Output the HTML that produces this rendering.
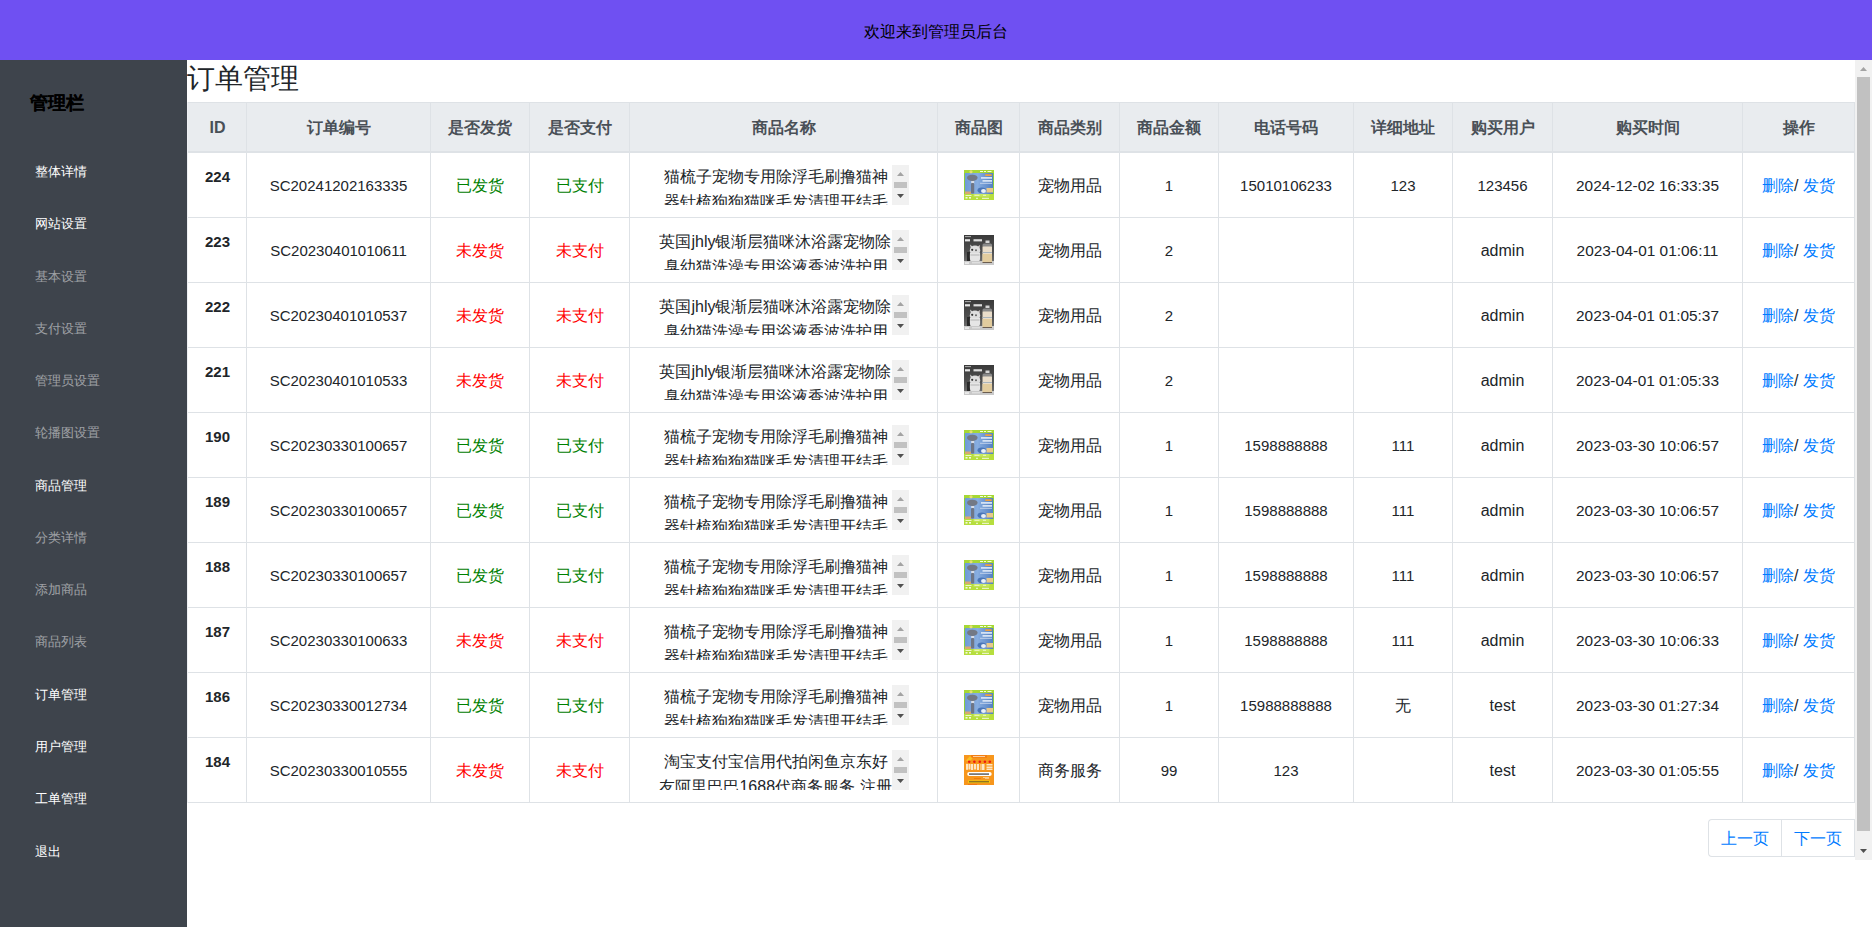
<!DOCTYPE html><html><head><meta charset="utf-8"><title>订单管理</title><style>
*{margin:0;padding:0;box-sizing:border-box}
html,body{width:1872px;height:927px;overflow:hidden;background:#fff}
body{font-family:"Liberation Sans",sans-serif;color:#212529;font-size:16px;position:relative}
.a{position:absolute}
.t{position:absolute;text-align:center;white-space:nowrap;line-height:24px;height:24px}
.vl{position:absolute;width:1px;background:#dee2e6}
.hl{position:absolute;height:1px;background:#dee2e6}
.th{font-weight:bold;color:#495057}
.idc{font-weight:bold;font-size:15px}
.n15{font-size:15px}.n154{font-size:15.4px}
.g{color:#008000}.r{color:#ff0000}
.lk{color:#007bff}
.menu{position:absolute;left:35px;font-size:13px;line-height:20px;height:20px;white-space:nowrap}
.sb{position:absolute;background:#f1f1f1}
.nm{position:absolute;width:250px;height:40px;overflow:hidden}
.nm .tx{position:absolute;left:0;top:0;width:233px;text-align:center;line-height:24px}
</style></head><body>
<div class="a" style="left:0;top:0;width:1872px;height:60px;background:#6f50f2"></div>
<div class="t" style="left:0;width:1872px;top:20px;color:#000">欢迎来到管理员后台</div>
<div class="a" style="left:0;top:60px;width:187px;height:867px;background:#3e444c"></div>
<div class="a" style="left:30px;top:88px;font-size:18.4px;font-weight:700;-webkit-text-stroke:0.12px #000;line-height:30px;color:#000;white-space:nowrap">管理栏</div>
<div class="menu" style="top:162.00px;color:#ffffff">整体详情</div>
<div class="menu" style="top:214.27px;color:#ffffff">网站设置</div>
<div class="menu" style="top:266.54px;color:rgba(255,255,255,.5)">基本设置</div>
<div class="menu" style="top:318.81px;color:rgba(255,255,255,.5)">支付设置</div>
<div class="menu" style="top:371.08px;color:rgba(255,255,255,.5)">管理员设置</div>
<div class="menu" style="top:423.35px;color:rgba(255,255,255,.5)">轮播图设置</div>
<div class="menu" style="top:475.62px;color:#ffffff">商品管理</div>
<div class="menu" style="top:527.89px;color:rgba(255,255,255,.5)">分类详情</div>
<div class="menu" style="top:580.16px;color:rgba(255,255,255,.5)">添加商品</div>
<div class="menu" style="top:632.43px;color:rgba(255,255,255,.5)">商品列表</div>
<div class="menu" style="top:684.70px;color:#ffffff">订单管理</div>
<div class="menu" style="top:736.97px;color:#ffffff">用户管理</div>
<div class="menu" style="top:789.24px;color:#ffffff">工单管理</div>
<div class="menu" style="top:841.51px;color:#ffffff">退出</div>
<div class="a" style="left:187px;top:61px;font-size:28px;line-height:36px;white-space:nowrap;color:#212529">订单管理</div>
<div class="a" style="left:187px;top:102px;width:1668px;height:50px;background:#e9ecef"></div>
<div class="hl" style="left:188px;top:102px;width:1667px"></div>
<div class="hl" style="left:188px;top:151px;width:1667px;height:2px"></div>
<div class="hl" style="left:188px;top:217px;width:1667px"></div>
<div class="hl" style="left:188px;top:282px;width:1667px"></div>
<div class="hl" style="left:188px;top:347px;width:1667px"></div>
<div class="hl" style="left:188px;top:412px;width:1667px"></div>
<div class="hl" style="left:188px;top:477px;width:1667px"></div>
<div class="hl" style="left:188px;top:542px;width:1667px"></div>
<div class="hl" style="left:188px;top:607px;width:1667px"></div>
<div class="hl" style="left:188px;top:672px;width:1667px"></div>
<div class="hl" style="left:188px;top:737px;width:1667px"></div>
<div class="hl" style="left:188px;top:802px;width:1667px"></div>
<div class="vl" style="left:246px;top:102px;height:701px"></div>
<div class="vl" style="left:430px;top:102px;height:701px"></div>
<div class="vl" style="left:529px;top:102px;height:701px"></div>
<div class="vl" style="left:629px;top:102px;height:701px"></div>
<div class="vl" style="left:937px;top:102px;height:701px"></div>
<div class="vl" style="left:1019px;top:102px;height:701px"></div>
<div class="vl" style="left:1119px;top:102px;height:701px"></div>
<div class="vl" style="left:1218px;top:102px;height:701px"></div>
<div class="vl" style="left:1353px;top:102px;height:701px"></div>
<div class="vl" style="left:1452px;top:102px;height:701px"></div>
<div class="vl" style="left:1552px;top:102px;height:701px"></div>
<div class="vl" style="left:1742px;top:102px;height:701px"></div>
<div class="vl" style="left:1854px;top:102px;height:701px"></div>
<div class="vl" style="left:187px;top:102px;height:701px;background:#eef0f3"></div>
<div class="t th" style="left:189px;width:57px;top:115.5px">ID</div>
<div class="t th" style="left:247px;width:183px;top:115.5px">订单编号</div>
<div class="t th" style="left:431px;width:98px;top:115.5px">是否发货</div>
<div class="t th" style="left:530px;width:99px;top:115.5px">是否支付</div>
<div class="t th" style="left:630px;width:307px;top:115.5px">商品名称</div>
<div class="t th" style="left:938px;width:81px;top:115.5px">商品图</div>
<div class="t th" style="left:1020px;width:99px;top:115.5px">商品类别</div>
<div class="t th" style="left:1120px;width:98px;top:115.5px">商品金额</div>
<div class="t th" style="left:1219px;width:134px;top:115.5px">电话号码</div>
<div class="t th" style="left:1354px;width:98px;top:115.5px">详细地址</div>
<div class="t th" style="left:1453px;width:99px;top:115.5px">购买用户</div>
<div class="t th" style="left:1553px;width:189px;top:115.5px">购买时间</div>
<div class="t th" style="left:1743px;width:111px;top:115.5px">操作</div>
<div class="t idc" style="left:189px;width:57px;top:165px">224</div>
<div class="t n15" style="left:247px;width:183px;top:174px">SC20241202163335</div>
<div class="t g" style="left:431px;width:98px;top:174px">已发货</div>
<div class="t g" style="left:530px;width:99px;top:174px">已支付</div>
<div class="nm" style="left:659px;top:165px"><div class="tx">猫梳子宠物专用除浮毛刷撸猫神</div><div class="tx" style="top:25px">器针梳狗狗猫咪毛发清理开结毛</div></div>
<div class="sb" style="left:892px;top:165px;width:17px;height:40px"></div>
<svg class="a" style="left:897px;top:172px" width="7" height="4"><polygon points="0,4 3.5,0 7,4" fill="#a3a3a3"/></svg>
<div class="a" style="left:894px;top:182px;width:13px;height:6px;background:#c1c1c1"></div>
<svg class="a" style="left:897px;top:194px" width="7" height="4"><polygon points="0,0 7,0 3.5,4" fill="#505050"/></svg>
<svg class="a" style="left:964px;top:170px" width="30" height="30" viewBox="0 0 30 30"><defs><linearGradient id="gc" x1="0" y1="0" x2="1" y2="0"><stop offset="0" stop-color="#6e9ad5"/><stop offset=".45" stop-color="#88aee0"/><stop offset="1" stop-color="#527fc1"/></linearGradient></defs>
<rect width="30" height="30" fill="#8ccf3c"/>
<rect x="1" y="3" width="28" height="21.5" fill="url(#gc)"/>
<rect x="0" y="0" width="30" height="3" fill="#a6d834"/>
<circle cx="7" cy="1.8" r="1.6" fill="#e8e070"/>
<rect x="16" y="1" width="3" height="1" fill="#f4ffe0"/><rect x="20" y="1" width="2" height="1" fill="#f4ffe0"/><rect x="23.5" y="1" width="4" height="1" fill="#f4ffe0"/>
<rect x="1" y="21.5" width="6" height="3" fill="#d8a870"/>
<rect x="22.5" y="18" width="6.5" height="4.5" fill="#e8c88a"/>
<ellipse cx="8.3" cy="7.8" rx="5.3" ry="3.1" fill="#737985"/>
<rect x="7.2" y="11" width="3" height="2.5" fill="#d8dde6"/>
<rect x="7" y="13" width="3.2" height="10.5" rx="1" fill="#6e7686"/>
<rect x="21" y="4.2" width="7" height="1.8" rx=".9" fill="#f0a040"/>
<rect x="17" y="7" width="11" height="1.8" fill="#d4e2f4"/>
<rect x="18.5" y="10" width="9.5" height="1.8" fill="#d4e2f4"/>
<rect x="16" y="12.8" width="12" height="1" fill="#c0d2ec"/>
<ellipse cx="17.8" cy="20.3" rx="4.3" ry="2.8" fill="#4a76b8"/>
<ellipse cx="19.5" cy="21" rx="2.5" ry="2" fill="#e8eef7"/>
<rect x="0" y="24" width="30" height="6" fill="#b6de3e"/>
<rect x="9.5" y="24" width="16" height="2.6" fill="#c8e860"/>
<rect x="10.5" y="24.8" width="5" height="1" fill="#eef8c8"/><rect x="19" y="24.8" width="3" height="1" fill="#eef8c8"/>
<rect x="1.5" y="25" width="6" height="1" fill="#eef8c8"/>
<rect x="1.5" y="27" width="2" height="1.6" fill="#f4f8e0"/><rect x="5" y="27" width="2" height="1.6" fill="#f4f8e0"/>
<rect x="12" y="27.8" width="2" height="1" fill="#f4f8e0"/><rect x="18" y="27.8" width="7" height="1" fill="#f4f8e0"/></svg>
<div class="t " style="left:1020px;width:99px;top:174px">宠物用品</div>
<div class="t n15" style="left:1120px;width:98px;top:174px">1</div>
<div class="t n15" style="left:1219px;width:134px;top:174px">15010106233</div>
<div class="t n15" style="left:1354px;width:98px;top:174px">123</div>
<div class="t n15" style="left:1453px;width:99px;top:174px">123456</div>
<div class="t n154" style="left:1553px;width:189px;top:174px">2024-12-02 16:33:35</div>
<div class="t" style="left:1743px;width:111px;top:174px"><span class="lk">删除</span>/ <span class="lk">发货</span></div>
<div class="t idc" style="left:189px;width:57px;top:230px">223</div>
<div class="t n15" style="left:247px;width:183px;top:239px">SC20230401010611</div>
<div class="t r" style="left:431px;width:98px;top:239px">未发货</div>
<div class="t r" style="left:530px;width:99px;top:239px">未支付</div>
<div class="nm" style="left:659px;top:230px"><div class="tx">英国jhly银渐层猫咪沐浴露宠物除</div><div class="tx" style="top:25px">臭幼猫洗澡专用浴液香波洗护用</div></div>
<div class="sb" style="left:892px;top:230px;width:17px;height:40px"></div>
<svg class="a" style="left:897px;top:237px" width="7" height="4"><polygon points="0,4 3.5,0 7,4" fill="#a3a3a3"/></svg>
<div class="a" style="left:894px;top:247px;width:13px;height:6px;background:#c1c1c1"></div>
<svg class="a" style="left:897px;top:259px" width="7" height="4"><polygon points="0,0 7,0 3.5,4" fill="#505050"/></svg>
<svg class="a" style="left:964px;top:235px" width="30" height="30" viewBox="0 0 30 30"><defs><linearGradient id="gk" x1="0" y1="0" x2="0" y2="1"><stop offset="0" stop-color="#3a3a3a"/><stop offset=".55" stop-color="#4f4f4f"/><stop offset=".85" stop-color="#6a6a6a"/><stop offset="1" stop-color="#cfcfcf"/></linearGradient></defs>
<rect width="30" height="30" fill="url(#gk)"/>
<rect x="0" y="26" width="30" height="4" fill="#c9c9c9"/>
<rect x="1" y="1.2" width="6" height="0.9" fill="#bdbdbd"/>
<rect x="1" y="4.2" width="5" height="2.2" fill="#e6e6e6"/>
<rect x="9.5" y="4.2" width="8.5" height="2.2" fill="#dcdcdc"/>
<rect x="3" y="17" width="3" height="9" fill="#2a2a2a"/>
<polygon points="6,9.5 9,12 7,14" fill="#d8d8d8"/><polygon points="16,10 13,12 15.5,14" fill="#d0c8c8"/>
<ellipse cx="11" cy="15.5" rx="5.2" ry="5" fill="#dedede"/>
<path d="M6,18 Q5.5,26 7,26 L15,26 Q16.5,26 16,18 Z" fill="#e6e6e6"/>
<rect x="6.5" y="19" width="9" height="2" fill="#bdbdbd" opacity=".6"/>
<circle cx="8.2" cy="14.8" r="1.1" fill="#333"/><circle cx="12" cy="15.2" r="1" fill="#666"/>
<rect x="21.5" y="5.5" width="4" height="2.5" fill="#d4d4d4"/>
<rect x="18.5" y="8.5" width="9.5" height="3.5" rx="1.5" fill="#8a8a8a"/>
<rect x="18.5" y="11.5" width="9.5" height="16" fill="#e9ddca"/>
<rect x="18.5" y="17" width="9.5" height="1" fill="#a9b4bc"/>
<rect x="18.5" y="19" width="9.5" height="8" fill="#e2cc9e"/>
<rect x="18.5" y="27" width="9.5" height="1" fill="#6b5d50"/>
<rect x="1" y="27.3" width="4" height="1.5" fill="#f2f2f2"/><rect x="8" y="27.3" width="8" height="1" fill="#e8e8e8"/></svg>
<div class="t " style="left:1020px;width:99px;top:239px">宠物用品</div>
<div class="t n15" style="left:1120px;width:98px;top:239px">2</div>
<div class="t " style="left:1453px;width:99px;top:239px">admin</div>
<div class="t n154" style="left:1553px;width:189px;top:239px">2023-04-01 01:06:11</div>
<div class="t" style="left:1743px;width:111px;top:239px"><span class="lk">删除</span>/ <span class="lk">发货</span></div>
<div class="t idc" style="left:189px;width:57px;top:295px">222</div>
<div class="t n15" style="left:247px;width:183px;top:304px">SC20230401010537</div>
<div class="t r" style="left:431px;width:98px;top:304px">未发货</div>
<div class="t r" style="left:530px;width:99px;top:304px">未支付</div>
<div class="nm" style="left:659px;top:295px"><div class="tx">英国jhly银渐层猫咪沐浴露宠物除</div><div class="tx" style="top:25px">臭幼猫洗澡专用浴液香波洗护用</div></div>
<div class="sb" style="left:892px;top:295px;width:17px;height:40px"></div>
<svg class="a" style="left:897px;top:302px" width="7" height="4"><polygon points="0,4 3.5,0 7,4" fill="#a3a3a3"/></svg>
<div class="a" style="left:894px;top:312px;width:13px;height:6px;background:#c1c1c1"></div>
<svg class="a" style="left:897px;top:324px" width="7" height="4"><polygon points="0,0 7,0 3.5,4" fill="#505050"/></svg>
<svg class="a" style="left:964px;top:300px" width="30" height="30" viewBox="0 0 30 30"><defs><linearGradient id="gk" x1="0" y1="0" x2="0" y2="1"><stop offset="0" stop-color="#3a3a3a"/><stop offset=".55" stop-color="#4f4f4f"/><stop offset=".85" stop-color="#6a6a6a"/><stop offset="1" stop-color="#cfcfcf"/></linearGradient></defs>
<rect width="30" height="30" fill="url(#gk)"/>
<rect x="0" y="26" width="30" height="4" fill="#c9c9c9"/>
<rect x="1" y="1.2" width="6" height="0.9" fill="#bdbdbd"/>
<rect x="1" y="4.2" width="5" height="2.2" fill="#e6e6e6"/>
<rect x="9.5" y="4.2" width="8.5" height="2.2" fill="#dcdcdc"/>
<rect x="3" y="17" width="3" height="9" fill="#2a2a2a"/>
<polygon points="6,9.5 9,12 7,14" fill="#d8d8d8"/><polygon points="16,10 13,12 15.5,14" fill="#d0c8c8"/>
<ellipse cx="11" cy="15.5" rx="5.2" ry="5" fill="#dedede"/>
<path d="M6,18 Q5.5,26 7,26 L15,26 Q16.5,26 16,18 Z" fill="#e6e6e6"/>
<rect x="6.5" y="19" width="9" height="2" fill="#bdbdbd" opacity=".6"/>
<circle cx="8.2" cy="14.8" r="1.1" fill="#333"/><circle cx="12" cy="15.2" r="1" fill="#666"/>
<rect x="21.5" y="5.5" width="4" height="2.5" fill="#d4d4d4"/>
<rect x="18.5" y="8.5" width="9.5" height="3.5" rx="1.5" fill="#8a8a8a"/>
<rect x="18.5" y="11.5" width="9.5" height="16" fill="#e9ddca"/>
<rect x="18.5" y="17" width="9.5" height="1" fill="#a9b4bc"/>
<rect x="18.5" y="19" width="9.5" height="8" fill="#e2cc9e"/>
<rect x="18.5" y="27" width="9.5" height="1" fill="#6b5d50"/>
<rect x="1" y="27.3" width="4" height="1.5" fill="#f2f2f2"/><rect x="8" y="27.3" width="8" height="1" fill="#e8e8e8"/></svg>
<div class="t " style="left:1020px;width:99px;top:304px">宠物用品</div>
<div class="t n15" style="left:1120px;width:98px;top:304px">2</div>
<div class="t " style="left:1453px;width:99px;top:304px">admin</div>
<div class="t n154" style="left:1553px;width:189px;top:304px">2023-04-01 01:05:37</div>
<div class="t" style="left:1743px;width:111px;top:304px"><span class="lk">删除</span>/ <span class="lk">发货</span></div>
<div class="t idc" style="left:189px;width:57px;top:360px">221</div>
<div class="t n15" style="left:247px;width:183px;top:369px">SC20230401010533</div>
<div class="t r" style="left:431px;width:98px;top:369px">未发货</div>
<div class="t r" style="left:530px;width:99px;top:369px">未支付</div>
<div class="nm" style="left:659px;top:360px"><div class="tx">英国jhly银渐层猫咪沐浴露宠物除</div><div class="tx" style="top:25px">臭幼猫洗澡专用浴液香波洗护用</div></div>
<div class="sb" style="left:892px;top:360px;width:17px;height:40px"></div>
<svg class="a" style="left:897px;top:367px" width="7" height="4"><polygon points="0,4 3.5,0 7,4" fill="#a3a3a3"/></svg>
<div class="a" style="left:894px;top:377px;width:13px;height:6px;background:#c1c1c1"></div>
<svg class="a" style="left:897px;top:389px" width="7" height="4"><polygon points="0,0 7,0 3.5,4" fill="#505050"/></svg>
<svg class="a" style="left:964px;top:365px" width="30" height="30" viewBox="0 0 30 30"><defs><linearGradient id="gk" x1="0" y1="0" x2="0" y2="1"><stop offset="0" stop-color="#3a3a3a"/><stop offset=".55" stop-color="#4f4f4f"/><stop offset=".85" stop-color="#6a6a6a"/><stop offset="1" stop-color="#cfcfcf"/></linearGradient></defs>
<rect width="30" height="30" fill="url(#gk)"/>
<rect x="0" y="26" width="30" height="4" fill="#c9c9c9"/>
<rect x="1" y="1.2" width="6" height="0.9" fill="#bdbdbd"/>
<rect x="1" y="4.2" width="5" height="2.2" fill="#e6e6e6"/>
<rect x="9.5" y="4.2" width="8.5" height="2.2" fill="#dcdcdc"/>
<rect x="3" y="17" width="3" height="9" fill="#2a2a2a"/>
<polygon points="6,9.5 9,12 7,14" fill="#d8d8d8"/><polygon points="16,10 13,12 15.5,14" fill="#d0c8c8"/>
<ellipse cx="11" cy="15.5" rx="5.2" ry="5" fill="#dedede"/>
<path d="M6,18 Q5.5,26 7,26 L15,26 Q16.5,26 16,18 Z" fill="#e6e6e6"/>
<rect x="6.5" y="19" width="9" height="2" fill="#bdbdbd" opacity=".6"/>
<circle cx="8.2" cy="14.8" r="1.1" fill="#333"/><circle cx="12" cy="15.2" r="1" fill="#666"/>
<rect x="21.5" y="5.5" width="4" height="2.5" fill="#d4d4d4"/>
<rect x="18.5" y="8.5" width="9.5" height="3.5" rx="1.5" fill="#8a8a8a"/>
<rect x="18.5" y="11.5" width="9.5" height="16" fill="#e9ddca"/>
<rect x="18.5" y="17" width="9.5" height="1" fill="#a9b4bc"/>
<rect x="18.5" y="19" width="9.5" height="8" fill="#e2cc9e"/>
<rect x="18.5" y="27" width="9.5" height="1" fill="#6b5d50"/>
<rect x="1" y="27.3" width="4" height="1.5" fill="#f2f2f2"/><rect x="8" y="27.3" width="8" height="1" fill="#e8e8e8"/></svg>
<div class="t " style="left:1020px;width:99px;top:369px">宠物用品</div>
<div class="t n15" style="left:1120px;width:98px;top:369px">2</div>
<div class="t " style="left:1453px;width:99px;top:369px">admin</div>
<div class="t n154" style="left:1553px;width:189px;top:369px">2023-04-01 01:05:33</div>
<div class="t" style="left:1743px;width:111px;top:369px"><span class="lk">删除</span>/ <span class="lk">发货</span></div>
<div class="t idc" style="left:189px;width:57px;top:425px">190</div>
<div class="t n15" style="left:247px;width:183px;top:434px">SC20230330100657</div>
<div class="t g" style="left:431px;width:98px;top:434px">已发货</div>
<div class="t g" style="left:530px;width:99px;top:434px">已支付</div>
<div class="nm" style="left:659px;top:425px"><div class="tx">猫梳子宠物专用除浮毛刷撸猫神</div><div class="tx" style="top:25px">器针梳狗狗猫咪毛发清理开结毛</div></div>
<div class="sb" style="left:892px;top:425px;width:17px;height:40px"></div>
<svg class="a" style="left:897px;top:432px" width="7" height="4"><polygon points="0,4 3.5,0 7,4" fill="#a3a3a3"/></svg>
<div class="a" style="left:894px;top:442px;width:13px;height:6px;background:#c1c1c1"></div>
<svg class="a" style="left:897px;top:454px" width="7" height="4"><polygon points="0,0 7,0 3.5,4" fill="#505050"/></svg>
<svg class="a" style="left:964px;top:430px" width="30" height="30" viewBox="0 0 30 30"><defs><linearGradient id="gc" x1="0" y1="0" x2="1" y2="0"><stop offset="0" stop-color="#6e9ad5"/><stop offset=".45" stop-color="#88aee0"/><stop offset="1" stop-color="#527fc1"/></linearGradient></defs>
<rect width="30" height="30" fill="#8ccf3c"/>
<rect x="1" y="3" width="28" height="21.5" fill="url(#gc)"/>
<rect x="0" y="0" width="30" height="3" fill="#a6d834"/>
<circle cx="7" cy="1.8" r="1.6" fill="#e8e070"/>
<rect x="16" y="1" width="3" height="1" fill="#f4ffe0"/><rect x="20" y="1" width="2" height="1" fill="#f4ffe0"/><rect x="23.5" y="1" width="4" height="1" fill="#f4ffe0"/>
<rect x="1" y="21.5" width="6" height="3" fill="#d8a870"/>
<rect x="22.5" y="18" width="6.5" height="4.5" fill="#e8c88a"/>
<ellipse cx="8.3" cy="7.8" rx="5.3" ry="3.1" fill="#737985"/>
<rect x="7.2" y="11" width="3" height="2.5" fill="#d8dde6"/>
<rect x="7" y="13" width="3.2" height="10.5" rx="1" fill="#6e7686"/>
<rect x="21" y="4.2" width="7" height="1.8" rx=".9" fill="#f0a040"/>
<rect x="17" y="7" width="11" height="1.8" fill="#d4e2f4"/>
<rect x="18.5" y="10" width="9.5" height="1.8" fill="#d4e2f4"/>
<rect x="16" y="12.8" width="12" height="1" fill="#c0d2ec"/>
<ellipse cx="17.8" cy="20.3" rx="4.3" ry="2.8" fill="#4a76b8"/>
<ellipse cx="19.5" cy="21" rx="2.5" ry="2" fill="#e8eef7"/>
<rect x="0" y="24" width="30" height="6" fill="#b6de3e"/>
<rect x="9.5" y="24" width="16" height="2.6" fill="#c8e860"/>
<rect x="10.5" y="24.8" width="5" height="1" fill="#eef8c8"/><rect x="19" y="24.8" width="3" height="1" fill="#eef8c8"/>
<rect x="1.5" y="25" width="6" height="1" fill="#eef8c8"/>
<rect x="1.5" y="27" width="2" height="1.6" fill="#f4f8e0"/><rect x="5" y="27" width="2" height="1.6" fill="#f4f8e0"/>
<rect x="12" y="27.8" width="2" height="1" fill="#f4f8e0"/><rect x="18" y="27.8" width="7" height="1" fill="#f4f8e0"/></svg>
<div class="t " style="left:1020px;width:99px;top:434px">宠物用品</div>
<div class="t n15" style="left:1120px;width:98px;top:434px">1</div>
<div class="t n15" style="left:1219px;width:134px;top:434px">1598888888</div>
<div class="t n15" style="left:1354px;width:98px;top:434px">111</div>
<div class="t " style="left:1453px;width:99px;top:434px">admin</div>
<div class="t n154" style="left:1553px;width:189px;top:434px">2023-03-30 10:06:57</div>
<div class="t" style="left:1743px;width:111px;top:434px"><span class="lk">删除</span>/ <span class="lk">发货</span></div>
<div class="t idc" style="left:189px;width:57px;top:490px">189</div>
<div class="t n15" style="left:247px;width:183px;top:499px">SC20230330100657</div>
<div class="t g" style="left:431px;width:98px;top:499px">已发货</div>
<div class="t g" style="left:530px;width:99px;top:499px">已支付</div>
<div class="nm" style="left:659px;top:490px"><div class="tx">猫梳子宠物专用除浮毛刷撸猫神</div><div class="tx" style="top:25px">器针梳狗狗猫咪毛发清理开结毛</div></div>
<div class="sb" style="left:892px;top:490px;width:17px;height:40px"></div>
<svg class="a" style="left:897px;top:497px" width="7" height="4"><polygon points="0,4 3.5,0 7,4" fill="#a3a3a3"/></svg>
<div class="a" style="left:894px;top:507px;width:13px;height:6px;background:#c1c1c1"></div>
<svg class="a" style="left:897px;top:519px" width="7" height="4"><polygon points="0,0 7,0 3.5,4" fill="#505050"/></svg>
<svg class="a" style="left:964px;top:495px" width="30" height="30" viewBox="0 0 30 30"><defs><linearGradient id="gc" x1="0" y1="0" x2="1" y2="0"><stop offset="0" stop-color="#6e9ad5"/><stop offset=".45" stop-color="#88aee0"/><stop offset="1" stop-color="#527fc1"/></linearGradient></defs>
<rect width="30" height="30" fill="#8ccf3c"/>
<rect x="1" y="3" width="28" height="21.5" fill="url(#gc)"/>
<rect x="0" y="0" width="30" height="3" fill="#a6d834"/>
<circle cx="7" cy="1.8" r="1.6" fill="#e8e070"/>
<rect x="16" y="1" width="3" height="1" fill="#f4ffe0"/><rect x="20" y="1" width="2" height="1" fill="#f4ffe0"/><rect x="23.5" y="1" width="4" height="1" fill="#f4ffe0"/>
<rect x="1" y="21.5" width="6" height="3" fill="#d8a870"/>
<rect x="22.5" y="18" width="6.5" height="4.5" fill="#e8c88a"/>
<ellipse cx="8.3" cy="7.8" rx="5.3" ry="3.1" fill="#737985"/>
<rect x="7.2" y="11" width="3" height="2.5" fill="#d8dde6"/>
<rect x="7" y="13" width="3.2" height="10.5" rx="1" fill="#6e7686"/>
<rect x="21" y="4.2" width="7" height="1.8" rx=".9" fill="#f0a040"/>
<rect x="17" y="7" width="11" height="1.8" fill="#d4e2f4"/>
<rect x="18.5" y="10" width="9.5" height="1.8" fill="#d4e2f4"/>
<rect x="16" y="12.8" width="12" height="1" fill="#c0d2ec"/>
<ellipse cx="17.8" cy="20.3" rx="4.3" ry="2.8" fill="#4a76b8"/>
<ellipse cx="19.5" cy="21" rx="2.5" ry="2" fill="#e8eef7"/>
<rect x="0" y="24" width="30" height="6" fill="#b6de3e"/>
<rect x="9.5" y="24" width="16" height="2.6" fill="#c8e860"/>
<rect x="10.5" y="24.8" width="5" height="1" fill="#eef8c8"/><rect x="19" y="24.8" width="3" height="1" fill="#eef8c8"/>
<rect x="1.5" y="25" width="6" height="1" fill="#eef8c8"/>
<rect x="1.5" y="27" width="2" height="1.6" fill="#f4f8e0"/><rect x="5" y="27" width="2" height="1.6" fill="#f4f8e0"/>
<rect x="12" y="27.8" width="2" height="1" fill="#f4f8e0"/><rect x="18" y="27.8" width="7" height="1" fill="#f4f8e0"/></svg>
<div class="t " style="left:1020px;width:99px;top:499px">宠物用品</div>
<div class="t n15" style="left:1120px;width:98px;top:499px">1</div>
<div class="t n15" style="left:1219px;width:134px;top:499px">1598888888</div>
<div class="t n15" style="left:1354px;width:98px;top:499px">111</div>
<div class="t " style="left:1453px;width:99px;top:499px">admin</div>
<div class="t n154" style="left:1553px;width:189px;top:499px">2023-03-30 10:06:57</div>
<div class="t" style="left:1743px;width:111px;top:499px"><span class="lk">删除</span>/ <span class="lk">发货</span></div>
<div class="t idc" style="left:189px;width:57px;top:555px">188</div>
<div class="t n15" style="left:247px;width:183px;top:564px">SC20230330100657</div>
<div class="t g" style="left:431px;width:98px;top:564px">已发货</div>
<div class="t g" style="left:530px;width:99px;top:564px">已支付</div>
<div class="nm" style="left:659px;top:555px"><div class="tx">猫梳子宠物专用除浮毛刷撸猫神</div><div class="tx" style="top:25px">器针梳狗狗猫咪毛发清理开结毛</div></div>
<div class="sb" style="left:892px;top:555px;width:17px;height:40px"></div>
<svg class="a" style="left:897px;top:562px" width="7" height="4"><polygon points="0,4 3.5,0 7,4" fill="#a3a3a3"/></svg>
<div class="a" style="left:894px;top:572px;width:13px;height:6px;background:#c1c1c1"></div>
<svg class="a" style="left:897px;top:584px" width="7" height="4"><polygon points="0,0 7,0 3.5,4" fill="#505050"/></svg>
<svg class="a" style="left:964px;top:560px" width="30" height="30" viewBox="0 0 30 30"><defs><linearGradient id="gc" x1="0" y1="0" x2="1" y2="0"><stop offset="0" stop-color="#6e9ad5"/><stop offset=".45" stop-color="#88aee0"/><stop offset="1" stop-color="#527fc1"/></linearGradient></defs>
<rect width="30" height="30" fill="#8ccf3c"/>
<rect x="1" y="3" width="28" height="21.5" fill="url(#gc)"/>
<rect x="0" y="0" width="30" height="3" fill="#a6d834"/>
<circle cx="7" cy="1.8" r="1.6" fill="#e8e070"/>
<rect x="16" y="1" width="3" height="1" fill="#f4ffe0"/><rect x="20" y="1" width="2" height="1" fill="#f4ffe0"/><rect x="23.5" y="1" width="4" height="1" fill="#f4ffe0"/>
<rect x="1" y="21.5" width="6" height="3" fill="#d8a870"/>
<rect x="22.5" y="18" width="6.5" height="4.5" fill="#e8c88a"/>
<ellipse cx="8.3" cy="7.8" rx="5.3" ry="3.1" fill="#737985"/>
<rect x="7.2" y="11" width="3" height="2.5" fill="#d8dde6"/>
<rect x="7" y="13" width="3.2" height="10.5" rx="1" fill="#6e7686"/>
<rect x="21" y="4.2" width="7" height="1.8" rx=".9" fill="#f0a040"/>
<rect x="17" y="7" width="11" height="1.8" fill="#d4e2f4"/>
<rect x="18.5" y="10" width="9.5" height="1.8" fill="#d4e2f4"/>
<rect x="16" y="12.8" width="12" height="1" fill="#c0d2ec"/>
<ellipse cx="17.8" cy="20.3" rx="4.3" ry="2.8" fill="#4a76b8"/>
<ellipse cx="19.5" cy="21" rx="2.5" ry="2" fill="#e8eef7"/>
<rect x="0" y="24" width="30" height="6" fill="#b6de3e"/>
<rect x="9.5" y="24" width="16" height="2.6" fill="#c8e860"/>
<rect x="10.5" y="24.8" width="5" height="1" fill="#eef8c8"/><rect x="19" y="24.8" width="3" height="1" fill="#eef8c8"/>
<rect x="1.5" y="25" width="6" height="1" fill="#eef8c8"/>
<rect x="1.5" y="27" width="2" height="1.6" fill="#f4f8e0"/><rect x="5" y="27" width="2" height="1.6" fill="#f4f8e0"/>
<rect x="12" y="27.8" width="2" height="1" fill="#f4f8e0"/><rect x="18" y="27.8" width="7" height="1" fill="#f4f8e0"/></svg>
<div class="t " style="left:1020px;width:99px;top:564px">宠物用品</div>
<div class="t n15" style="left:1120px;width:98px;top:564px">1</div>
<div class="t n15" style="left:1219px;width:134px;top:564px">1598888888</div>
<div class="t n15" style="left:1354px;width:98px;top:564px">111</div>
<div class="t " style="left:1453px;width:99px;top:564px">admin</div>
<div class="t n154" style="left:1553px;width:189px;top:564px">2023-03-30 10:06:57</div>
<div class="t" style="left:1743px;width:111px;top:564px"><span class="lk">删除</span>/ <span class="lk">发货</span></div>
<div class="t idc" style="left:189px;width:57px;top:620px">187</div>
<div class="t n15" style="left:247px;width:183px;top:629px">SC20230330100633</div>
<div class="t r" style="left:431px;width:98px;top:629px">未发货</div>
<div class="t r" style="left:530px;width:99px;top:629px">未支付</div>
<div class="nm" style="left:659px;top:620px"><div class="tx">猫梳子宠物专用除浮毛刷撸猫神</div><div class="tx" style="top:25px">器针梳狗狗猫咪毛发清理开结毛</div></div>
<div class="sb" style="left:892px;top:620px;width:17px;height:40px"></div>
<svg class="a" style="left:897px;top:627px" width="7" height="4"><polygon points="0,4 3.5,0 7,4" fill="#a3a3a3"/></svg>
<div class="a" style="left:894px;top:637px;width:13px;height:6px;background:#c1c1c1"></div>
<svg class="a" style="left:897px;top:649px" width="7" height="4"><polygon points="0,0 7,0 3.5,4" fill="#505050"/></svg>
<svg class="a" style="left:964px;top:625px" width="30" height="30" viewBox="0 0 30 30"><defs><linearGradient id="gc" x1="0" y1="0" x2="1" y2="0"><stop offset="0" stop-color="#6e9ad5"/><stop offset=".45" stop-color="#88aee0"/><stop offset="1" stop-color="#527fc1"/></linearGradient></defs>
<rect width="30" height="30" fill="#8ccf3c"/>
<rect x="1" y="3" width="28" height="21.5" fill="url(#gc)"/>
<rect x="0" y="0" width="30" height="3" fill="#a6d834"/>
<circle cx="7" cy="1.8" r="1.6" fill="#e8e070"/>
<rect x="16" y="1" width="3" height="1" fill="#f4ffe0"/><rect x="20" y="1" width="2" height="1" fill="#f4ffe0"/><rect x="23.5" y="1" width="4" height="1" fill="#f4ffe0"/>
<rect x="1" y="21.5" width="6" height="3" fill="#d8a870"/>
<rect x="22.5" y="18" width="6.5" height="4.5" fill="#e8c88a"/>
<ellipse cx="8.3" cy="7.8" rx="5.3" ry="3.1" fill="#737985"/>
<rect x="7.2" y="11" width="3" height="2.5" fill="#d8dde6"/>
<rect x="7" y="13" width="3.2" height="10.5" rx="1" fill="#6e7686"/>
<rect x="21" y="4.2" width="7" height="1.8" rx=".9" fill="#f0a040"/>
<rect x="17" y="7" width="11" height="1.8" fill="#d4e2f4"/>
<rect x="18.5" y="10" width="9.5" height="1.8" fill="#d4e2f4"/>
<rect x="16" y="12.8" width="12" height="1" fill="#c0d2ec"/>
<ellipse cx="17.8" cy="20.3" rx="4.3" ry="2.8" fill="#4a76b8"/>
<ellipse cx="19.5" cy="21" rx="2.5" ry="2" fill="#e8eef7"/>
<rect x="0" y="24" width="30" height="6" fill="#b6de3e"/>
<rect x="9.5" y="24" width="16" height="2.6" fill="#c8e860"/>
<rect x="10.5" y="24.8" width="5" height="1" fill="#eef8c8"/><rect x="19" y="24.8" width="3" height="1" fill="#eef8c8"/>
<rect x="1.5" y="25" width="6" height="1" fill="#eef8c8"/>
<rect x="1.5" y="27" width="2" height="1.6" fill="#f4f8e0"/><rect x="5" y="27" width="2" height="1.6" fill="#f4f8e0"/>
<rect x="12" y="27.8" width="2" height="1" fill="#f4f8e0"/><rect x="18" y="27.8" width="7" height="1" fill="#f4f8e0"/></svg>
<div class="t " style="left:1020px;width:99px;top:629px">宠物用品</div>
<div class="t n15" style="left:1120px;width:98px;top:629px">1</div>
<div class="t n15" style="left:1219px;width:134px;top:629px">1598888888</div>
<div class="t n15" style="left:1354px;width:98px;top:629px">111</div>
<div class="t " style="left:1453px;width:99px;top:629px">admin</div>
<div class="t n154" style="left:1553px;width:189px;top:629px">2023-03-30 10:06:33</div>
<div class="t" style="left:1743px;width:111px;top:629px"><span class="lk">删除</span>/ <span class="lk">发货</span></div>
<div class="t idc" style="left:189px;width:57px;top:685px">186</div>
<div class="t n15" style="left:247px;width:183px;top:694px">SC20230330012734</div>
<div class="t g" style="left:431px;width:98px;top:694px">已发货</div>
<div class="t g" style="left:530px;width:99px;top:694px">已支付</div>
<div class="nm" style="left:659px;top:685px"><div class="tx">猫梳子宠物专用除浮毛刷撸猫神</div><div class="tx" style="top:25px">器针梳狗狗猫咪毛发清理开结毛</div></div>
<div class="sb" style="left:892px;top:685px;width:17px;height:40px"></div>
<svg class="a" style="left:897px;top:692px" width="7" height="4"><polygon points="0,4 3.5,0 7,4" fill="#a3a3a3"/></svg>
<div class="a" style="left:894px;top:702px;width:13px;height:6px;background:#c1c1c1"></div>
<svg class="a" style="left:897px;top:714px" width="7" height="4"><polygon points="0,0 7,0 3.5,4" fill="#505050"/></svg>
<svg class="a" style="left:964px;top:690px" width="30" height="30" viewBox="0 0 30 30"><defs><linearGradient id="gc" x1="0" y1="0" x2="1" y2="0"><stop offset="0" stop-color="#6e9ad5"/><stop offset=".45" stop-color="#88aee0"/><stop offset="1" stop-color="#527fc1"/></linearGradient></defs>
<rect width="30" height="30" fill="#8ccf3c"/>
<rect x="1" y="3" width="28" height="21.5" fill="url(#gc)"/>
<rect x="0" y="0" width="30" height="3" fill="#a6d834"/>
<circle cx="7" cy="1.8" r="1.6" fill="#e8e070"/>
<rect x="16" y="1" width="3" height="1" fill="#f4ffe0"/><rect x="20" y="1" width="2" height="1" fill="#f4ffe0"/><rect x="23.5" y="1" width="4" height="1" fill="#f4ffe0"/>
<rect x="1" y="21.5" width="6" height="3" fill="#d8a870"/>
<rect x="22.5" y="18" width="6.5" height="4.5" fill="#e8c88a"/>
<ellipse cx="8.3" cy="7.8" rx="5.3" ry="3.1" fill="#737985"/>
<rect x="7.2" y="11" width="3" height="2.5" fill="#d8dde6"/>
<rect x="7" y="13" width="3.2" height="10.5" rx="1" fill="#6e7686"/>
<rect x="21" y="4.2" width="7" height="1.8" rx=".9" fill="#f0a040"/>
<rect x="17" y="7" width="11" height="1.8" fill="#d4e2f4"/>
<rect x="18.5" y="10" width="9.5" height="1.8" fill="#d4e2f4"/>
<rect x="16" y="12.8" width="12" height="1" fill="#c0d2ec"/>
<ellipse cx="17.8" cy="20.3" rx="4.3" ry="2.8" fill="#4a76b8"/>
<ellipse cx="19.5" cy="21" rx="2.5" ry="2" fill="#e8eef7"/>
<rect x="0" y="24" width="30" height="6" fill="#b6de3e"/>
<rect x="9.5" y="24" width="16" height="2.6" fill="#c8e860"/>
<rect x="10.5" y="24.8" width="5" height="1" fill="#eef8c8"/><rect x="19" y="24.8" width="3" height="1" fill="#eef8c8"/>
<rect x="1.5" y="25" width="6" height="1" fill="#eef8c8"/>
<rect x="1.5" y="27" width="2" height="1.6" fill="#f4f8e0"/><rect x="5" y="27" width="2" height="1.6" fill="#f4f8e0"/>
<rect x="12" y="27.8" width="2" height="1" fill="#f4f8e0"/><rect x="18" y="27.8" width="7" height="1" fill="#f4f8e0"/></svg>
<div class="t " style="left:1020px;width:99px;top:694px">宠物用品</div>
<div class="t n15" style="left:1120px;width:98px;top:694px">1</div>
<div class="t n15" style="left:1219px;width:134px;top:694px">15988888888</div>
<div class="t " style="left:1354px;width:98px;top:694px">无</div>
<div class="t " style="left:1453px;width:99px;top:694px">test</div>
<div class="t n154" style="left:1553px;width:189px;top:694px">2023-03-30 01:27:34</div>
<div class="t" style="left:1743px;width:111px;top:694px"><span class="lk">删除</span>/ <span class="lk">发货</span></div>
<div class="t idc" style="left:189px;width:57px;top:750px">184</div>
<div class="t n15" style="left:247px;width:183px;top:759px">SC20230330010555</div>
<div class="t r" style="left:431px;width:98px;top:759px">未发货</div>
<div class="t r" style="left:530px;width:99px;top:759px">未支付</div>
<div class="nm" style="left:659px;top:750px"><div class="tx">淘宝支付宝信用代拍闲鱼京东好</div><div class="tx" style="top:25px">友阿里巴巴1688代商务服务 注册</div></div>
<div class="sb" style="left:892px;top:750px;width:17px;height:40px"></div>
<svg class="a" style="left:897px;top:757px" width="7" height="4"><polygon points="0,4 3.5,0 7,4" fill="#a3a3a3"/></svg>
<div class="a" style="left:894px;top:767px;width:13px;height:6px;background:#c1c1c1"></div>
<svg class="a" style="left:897px;top:779px" width="7" height="4"><polygon points="0,0 7,0 3.5,4" fill="#505050"/></svg>
<svg class="a" style="left:964px;top:755px" width="30" height="30" viewBox="0 0 30 30"><rect width="30" height="30" fill="#f7961c"/>
<rect x="7" y="0" width="16" height="2.8" fill="#f47f12"/>
<rect x="9" y="1" width="12" height="0.8" fill="#fde2c0"/>
<polygon points="2,5.5 6,1 8.5,3.5 5,7" fill="#f9c124"/>
<circle cx="5.2" cy="6.8" r="1.3" fill="#ee1b0e"/><circle cx="10.4" cy="6.8" r="1.3" fill="#ee1b0e"/><circle cx="15.8" cy="6.8" r="1.3" fill="#ee1b0e"/><circle cx="20.9" cy="6.8" r="1.3" fill="#ee1b0e"/><circle cx="25.8" cy="6.8" r="1.3" fill="#ee1b0e"/>
<g fill="#fde6c4"><rect x="2" y="8.8" width="2" height="6"/><rect x="4.5" y="9" width="2" height="5.5"/><rect x="7" y="9" width="2.2" height="6"/><rect x="10" y="9" width="2.2" height="5.5"/><rect x="13" y="9" width="2" height="6"/><rect x="16.5" y="9" width="1" height="6"/><rect x="18" y="9" width="2.5" height="6"/><rect x="22.5" y="9" width="6" height="1.5"/><rect x="22.5" y="11.5" width="6" height="1.5"/><rect x="22.5" y="13.5" width="6" height="1.5"/></g>
<rect x="3.2" y="17" width="24.5" height="4" rx="2" fill="#ffffff"/>
<rect x="5" y="18.3" width="20" height="1.6" fill="#6a6a6a"/>
<rect x="19" y="22" width="6" height="0.8" fill="#fbd6a6"/><rect x="21" y="23.3" width="4" height="0.7" fill="#fbd6a6"/>
<rect x="10" y="23" width="7" height="1" fill="#f07c0c"/>
<rect x="4" y="25.3" width="22" height="2.7" fill="#f3c70e"/>
<rect x="5" y="26" width="20" height="1.4" fill="#8f7420"/>
<rect x="4" y="29" width="9" height="1" fill="#f07a14"/></svg>
<div class="t " style="left:1020px;width:99px;top:759px">商务服务</div>
<div class="t n15" style="left:1120px;width:98px;top:759px">99</div>
<div class="t n15" style="left:1219px;width:134px;top:759px">123</div>
<div class="t " style="left:1453px;width:99px;top:759px">test</div>
<div class="t n154" style="left:1553px;width:189px;top:759px">2023-03-30 01:05:55</div>
<div class="t" style="left:1743px;width:111px;top:759px"><span class="lk">删除</span>/ <span class="lk">发货</span></div>
<div class="a" style="left:1708px;top:819px;width:147px;height:38px;border:1px solid #dee2e6;border-radius:4px 0 0 4px;border-right:none"></div>
<div class="vl" style="left:1781px;top:819px;height:38px"></div>
<div class="vl" style="left:1854px;top:819px;height:38px"></div>
<div class="t lk" style="left:1709px;width:72px;top:827px">上一页</div>
<div class="t lk" style="left:1782px;width:72px;top:827px">下一页</div>
<div class="sb" style="left:1855px;top:60px;width:17px;height:800px"></div>
<svg class="a" style="left:1860px;top:67px" width="7" height="4"><polygon points="0,4 3.5,0 7,4" fill="#a3a3a3"/></svg>
<div class="a" style="left:1857px;top:77px;width:13px;height:754px;background:#c1c1c1"></div>
<svg class="a" style="left:1860px;top:849px" width="7" height="4"><polygon points="0,0 7,0 3.5,4" fill="#505050"/></svg>
</body></html>
